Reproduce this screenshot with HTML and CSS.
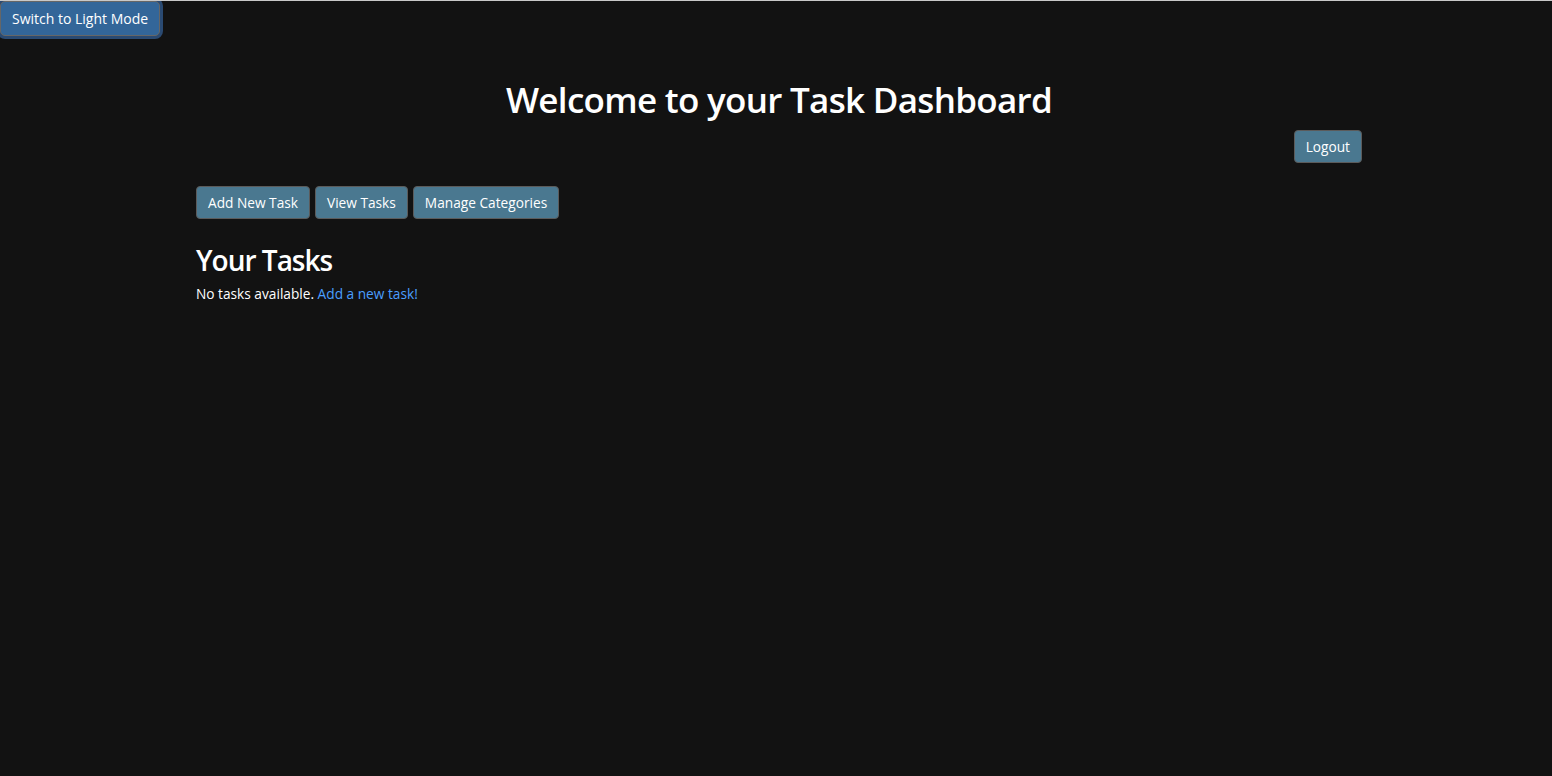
FILE: index.html
```html
<!DOCTYPE html>
<html lang="en">
<head>
<meta charset="utf-8">
<title>Task Dashboard</title>
<link rel="stylesheet" href="styles.css">
</head>
<body>
<button class="theme-toggle" type="button">Switch to Light Mode</button>
<main class="container">
  <h1 class="title">Welcome to your Task Dashboard</h1>
  <div class="logout-row">
    <button class="btn" type="button">Logout</button>
  </div>
  <nav class="actions">
    <button class="btn" type="button">Add New Task</button>
    <button class="btn" type="button">View Tasks</button>
    <button class="btn" type="button">Manage Categories</button>
  </nav>
  <h2 class="section-title">Your Tasks</h2>
  <p class="empty">No tasks available. <a href="#" class="link">Add a new task!</a></p>
</main>
</body>
</html>
```
FILE: styles.css
```css
html, body {
  margin: 0;
  padding: 0;
}
body {
  background: #121212;
  color: #ffffff;
  font-family: "Open Sans", "Noto Sans", sans-serif;
  font-size: 14px;
  border-top: 1px solid #c8c8c8;
  min-height: 775px;
}
.theme-toggle {
  display: block;
  margin: 0;
  height: 35px;
  padding: 0 11px;
  background: #336699;
  color: #ffffff;
  font-family: inherit;
  font-size: 14px;
  line-height: 31px;
  border: 1px solid #666666;
  border-radius: 5px;
  box-shadow: 0 0 0 3px #2a4a72;
}
.container {
  width: 1166px;
  margin-left: calc(50% - 580px);
}
.title {
  margin: 38px 0 0;
  text-align: center;
  font-size: 35px;
  font-weight: 600;
  letter-spacing: -0.7px;
  line-height: 52px;
}
.logout-row {
  display: flex;
  justify-content: flex-end;
  margin-top: 4px;
}
.btn {
  height: 33px;
  padding: 0 11px;
  background: #4a7890;
  color: #ffffff;
  font-family: inherit;
  font-size: 13.7px;
  border: 1px solid #5b5b5b;
  border-radius: 4px;
}
.actions {
  display: flex;
  gap: 5px;
  margin-top: 23px;
}
.section-title {
  margin: 24px 0 0;
  font-size: 28px;
  font-weight: 600;
  letter-spacing: -1px;
  line-height: 34px;
}
.empty {
  margin: 7px 0 0;
  font-size: 13.7px;
  line-height: 20px;
}
.link {
  color: #4a9fff;
  text-decoration: none;
}
```
